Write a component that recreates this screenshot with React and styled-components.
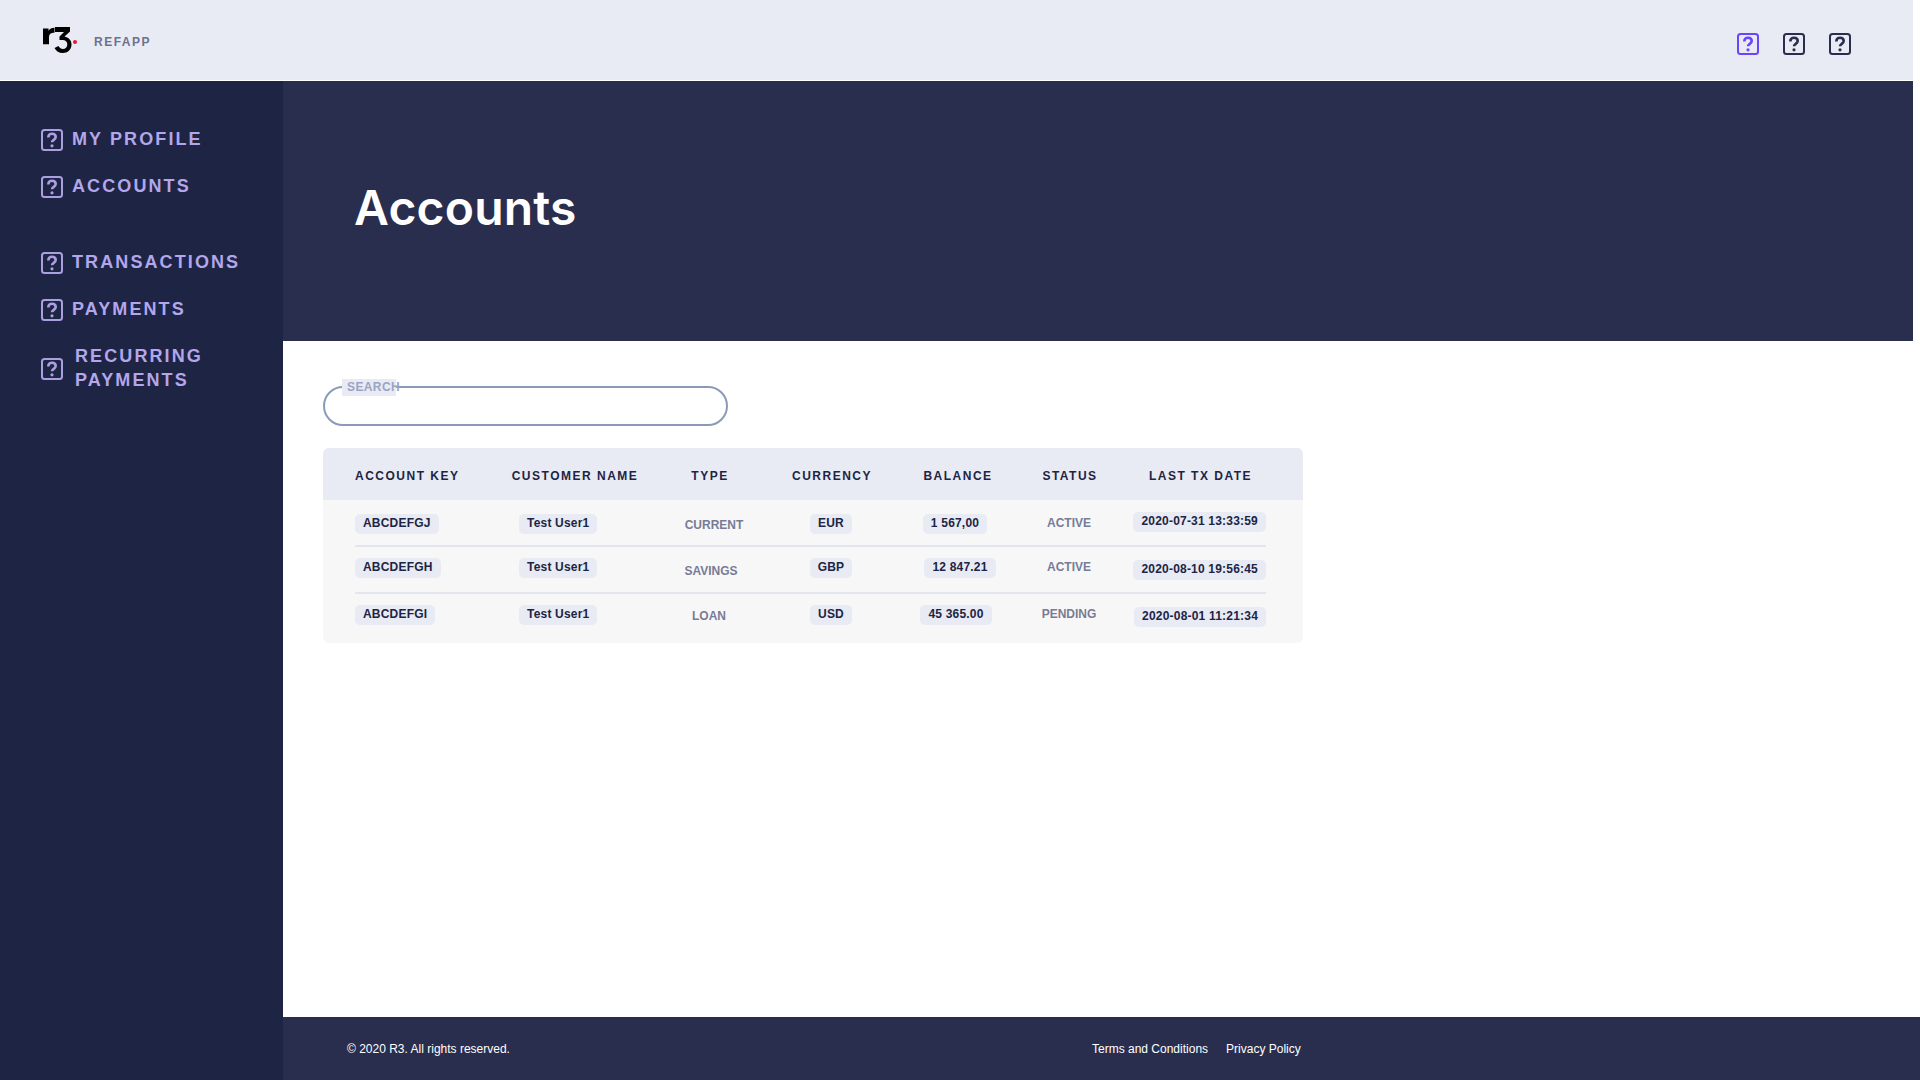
import React from 'react';
import styled, { createGlobalStyle } from 'styled-components';

const GlobalStyle = createGlobalStyle`
  html, body {
    margin: 0;
    padding: 0;
    background: #ffffff;
  }
  body {
    font-family: "Liberation Sans", Arial, sans-serif;
  }
`;

const Page = styled.div`
  width: 1920px;
  height: 1080px;
  display: flex;
  flex-direction: column;
  overflow: hidden;
`;

const TopBar = styled.header`
  width: 1913px;
  height: 80px;
  flex: none;
  display: flex;
  align-items: center;
  justify-content: space-between;
  padding: 0 62px 0 43px;
  box-sizing: border-box;
  background: #e8ebf3;
  margin-bottom: 1px;
`;

const Brand = styled.div`
  display: flex;
  align-items: center;
  gap: 17px;
`;

const AppName = styled.span`
  margin-top: 4px;
  font-size: 12px;
  font-weight: 700;
  letter-spacing: 1.5px;
  color: #6b7190;
`;

const TopIcons = styled.div`
  display: flex;
  gap: 24px;
  margin-top: 7px;
`;

const Body = styled.div`
  flex: 1;
  display: flex;
  min-height: 0;
`;

const Sidebar = styled.nav`
  width: 283px;
  flex: none;
  background: #1d2444;
  padding: 35px 0 0 41px;
  box-sizing: border-box;
`;

const NavGroup = styled.div`
  margin-bottom: 29px;
`;

const NavItem = styled.a`
  display: flex;
  align-items: center;
  gap: ${(p) => p.$gap || 9}px;
  padding: 10.5px 0;
  font-size: 18px;
  line-height: 24px;
  font-weight: 700;
  letter-spacing: 2.1px;
  color: #b3a6ea;
  text-transform: uppercase;
`;

const NavLabel = styled.span`
  margin-bottom: 2px;
`;

const Main = styled.main`
  flex: 1;
  display: flex;
  flex-direction: column;
  min-width: 0;
`;

const Hero = styled.section`
  width: 1630px;
  height: 260px;
  flex: none;
  display: flex;
  align-items: center;
  padding: 0 0 8px 71px;
  box-sizing: border-box;
  background: #2a2e4e;
`;

const Title = styled.h1`
  margin: 0;
  font-family: Inter, sans-serif;
  font-size: 48px;
  font-weight: 600;
  letter-spacing: 0.2px;
  color: #ffffff;
`;

const Content = styled.section`
  flex: 1;
  padding: 45px 0 0 40px;
`;

const SearchBox = styled.div`
  position: relative;
  width: 405px;
  height: 40px;
  box-sizing: border-box;
  border: 2px solid #8c9aba;
  border-radius: 20px;
  margin-bottom: 22px;
`;

const SearchLabel = styled.label`
  position: absolute;
  left: 17px;
  top: -9px;
  width: 54px;
  height: 17px;
  padding-left: 5px;
  box-sizing: border-box;
  font-size: 12px;
  line-height: 17px;
  font-weight: 700;
  letter-spacing: 0.4px;
  color: #9aa4c6;
  background: #e8ebf3;
  white-space: nowrap;
`;

const Table = styled.div`
  width: 980px;
  height: 195px;
  border-radius: 6px;
  background: #f7f7f8;
`;

const columns = '151px 136px 134px 110px 142px 82px 156px';

const HeadRow = styled.div`
  display: grid;
  grid-template-columns: ${columns};
  align-items: center;
  box-sizing: border-box;
  height: 52px;
  padding: 4px 0 0 32px;
  border-radius: 6px 6px 0 0;
  background: #e8ebf3;
`;

const HeadCell = styled.div`
  font-size: 12px;
  font-weight: 700;
  letter-spacing: 1.5px;
  color: #1d2444;
  white-space: nowrap;
  justify-self: ${(p) => p.$align || 'center'};
  margin-left: ${(p) => (p.$align ? 0 : 2)}px;
  margin-right: ${(p) => p.$right || 0}px;
`;

const Row = styled.div`
  display: grid;
  grid-template-columns: ${columns};
  align-items: start;
  box-sizing: border-box;
  height: ${(p) => p.$height}px;
  margin-left: 32px;
  padding-top: ${(p) => p.$top}px;
  width: 911px;
  border-bottom: ${(p) => (p.$last ? 'none' : '2px solid #e3e6f0')};
`;

const Chip = styled.span`
  height: 20px;
  line-height: 19px;
  padding: 0 8px;
  border-radius: 5px;
  background: #e8ebf3;
  font-size: 12px;
  font-weight: 700;
  letter-spacing: 0.2px;
  color: #1d2444;
  white-space: nowrap;
  justify-self: ${(p) => p.$align || 'center'};
  margin: ${(p) => p.$dy || 0}px 0 0 ${(p) => p.$dx || 0}px;
`;

const Plain = styled.span`
  height: 20px;
  line-height: 19px;
  font-size: 12px;
  font-weight: 700;
  color: #777c96;
  white-space: nowrap;
  justify-self: center;
  margin: ${(p) => p.$dy || 0}px 0 0 ${(p) => p.$dx || 0}px;
`;

const Footer = styled.footer`
  height: 63px;
  flex: none;
  display: flex;
  align-items: center;
  padding: 0 0 0 64px;
  background: #2a2e4e;
  color: #ffffff;
  font-size: 12px;
`;

const Copyright = styled.span`
  width: 745px;
`;

const FootLink = styled.a`
  margin-right: 18px;
  color: #ffffff;
`;

function QuestionIcon({ color }) {
  return (
    <svg width="22" height="22" viewBox="0 0 22 22" fill="none" style={{ flex: 'none' }}>
      <rect x="1" y="1" width="20" height="20" rx="2.5" stroke={color} strokeWidth="2" />
      <path
        d="M7.300 8.400c0-2.200 1.500-3.600 3.700-3.600s3.700 1.300 3.700 3.300c0 2.700-3.700 2.800-3.700 5.200"
        stroke={color}
        strokeWidth="2.600"
      />
      <circle cx="11" cy="16.800" r="1.600" fill={color} />
    </svg>
  );
}

function Logo() {
  return (
    <svg width="34" height="26" viewBox="0 0 34 26">
      <path d="M0 1.500h5.500v2.200c1.200-2 3.200-3 6-3v5c-3.500 0-5.500 1.300-5.500 4.500v7H0z" fill="#000" />
      <path
        d="M12 0h15v4.500l-5.500 5c4 .8 7 3.800 7 8 0 5-4 8.500-8.700 8.500-3.800 0-6.800-2-8.300-5l4-2c1 1.800 2.500 3 4.500 3 2.500 0 4.300-1.900 4.300-4.500 0-2.700-2-4.400-4.500-4.400H16.500V9.500L21 5H12z"
        fill="#000"
      />
      <circle cx="32" cy="15" r="2" fill="#e8173c" />
    </svg>
  );
}

const rows = [
  {
    key: 'ABCDEFGJ', type: 'CURRENT', typeDx: 10, typeDy: 2, currency: 'EUR', balance: '1 567,00', balanceDx: -4,
    status: 'ACTIVE', date: '2020-07-31 13:33:59', dateDy: -2, height: 47, top: 14,
  },
  {
    key: 'ABCDEFGH', type: 'SAVINGS', typeDx: 4, typeDy: 4, currency: 'GBP', balance: '12 847.21', balanceDx: 6,
    status: 'ACTIVE', date: '2020-08-10 19:56:45', dateDy: 2, height: 47, top: 11,
  },
  {
    key: 'ABCDEFGI', type: 'LOAN', typeDx: 0, typeDy: 2, currency: 'USD', balance: '45 365.00', balanceDx: -2,
    status: 'PENDING', date: '2020-08-01 11:21:34', dateDy: 2, height: 49, top: 11, last: true,
  },
];

export default function App() {
  return (
    <Page>
      <GlobalStyle />
      <TopBar>
        <Brand>
          <Logo />
          <AppName>REFAPP</AppName>
        </Brand>
        <TopIcons>
          <QuestionIcon color="#6a44ff" />
          <QuestionIcon color="#2a2e4e" />
          <QuestionIcon color="#2a2e4e" />
        </TopIcons>
      </TopBar>
      <Body>
        <Sidebar>
          <NavGroup>
            <NavItem><QuestionIcon color="#ab9fe0" /><NavLabel>My Profile</NavLabel></NavItem>
            <NavItem><QuestionIcon color="#ab9fe0" /><NavLabel>Accounts</NavLabel></NavItem>
          </NavGroup>
          <NavGroup>
            <NavItem><QuestionIcon color="#ab9fe0" /><NavLabel>Transactions</NavLabel></NavItem>
            <NavItem><QuestionIcon color="#ab9fe0" /><NavLabel>Payments</NavLabel></NavItem>
            <NavItem $gap={12}><QuestionIcon color="#ab9fe0" /><NavLabel>Recurring<br />Payments</NavLabel></NavItem>
          </NavGroup>
        </Sidebar>
        <Main>
          <Hero>
            <Title>Accounts</Title>
          </Hero>
          <Content>
            <SearchBox>
              <SearchLabel>SEARCH</SearchLabel>
            </SearchBox>
            <Table>
              <HeadRow>
                <HeadCell $align="start">ACCOUNT KEY</HeadCell>
                <HeadCell>CUSTOMER NAME</HeadCell>
                <HeadCell>TYPE</HeadCell>
                <HeadCell>CURRENCY</HeadCell>
                <HeadCell>BALANCE</HeadCell>
                <HeadCell>STATUS</HeadCell>
                <HeadCell $align="end" $right={14}>LAST TX DATE</HeadCell>
              </HeadRow>
              {rows.map((r) => (
                <Row key={r.key} $height={r.height} $top={r.top} $last={r.last}>
                  <Chip $align="start">{r.key}</Chip>
                  <Chip $align="start" $dx={13}>Test User1</Chip>
                  <Plain $dx={r.typeDx} $dy={r.typeDy}>{r.type}</Plain>
                  <Chip>{r.currency}</Chip>
                  <Chip $dx={r.balanceDx}>{r.balance}</Chip>
                  <Plain>{r.status}</Plain>
                  <Chip $align="end" $dy={r.dateDy}>{r.date}</Chip>
                </Row>
              ))}
            </Table>
          </Content>
          <Footer>
            <Copyright>© 2020 R3. All rights reserved.</Copyright>
            <FootLink>Terms and Conditions</FootLink>
            <FootLink>Privacy Policy</FootLink>
          </Footer>
        </Main>
      </Body>
    </Page>
  );
}
